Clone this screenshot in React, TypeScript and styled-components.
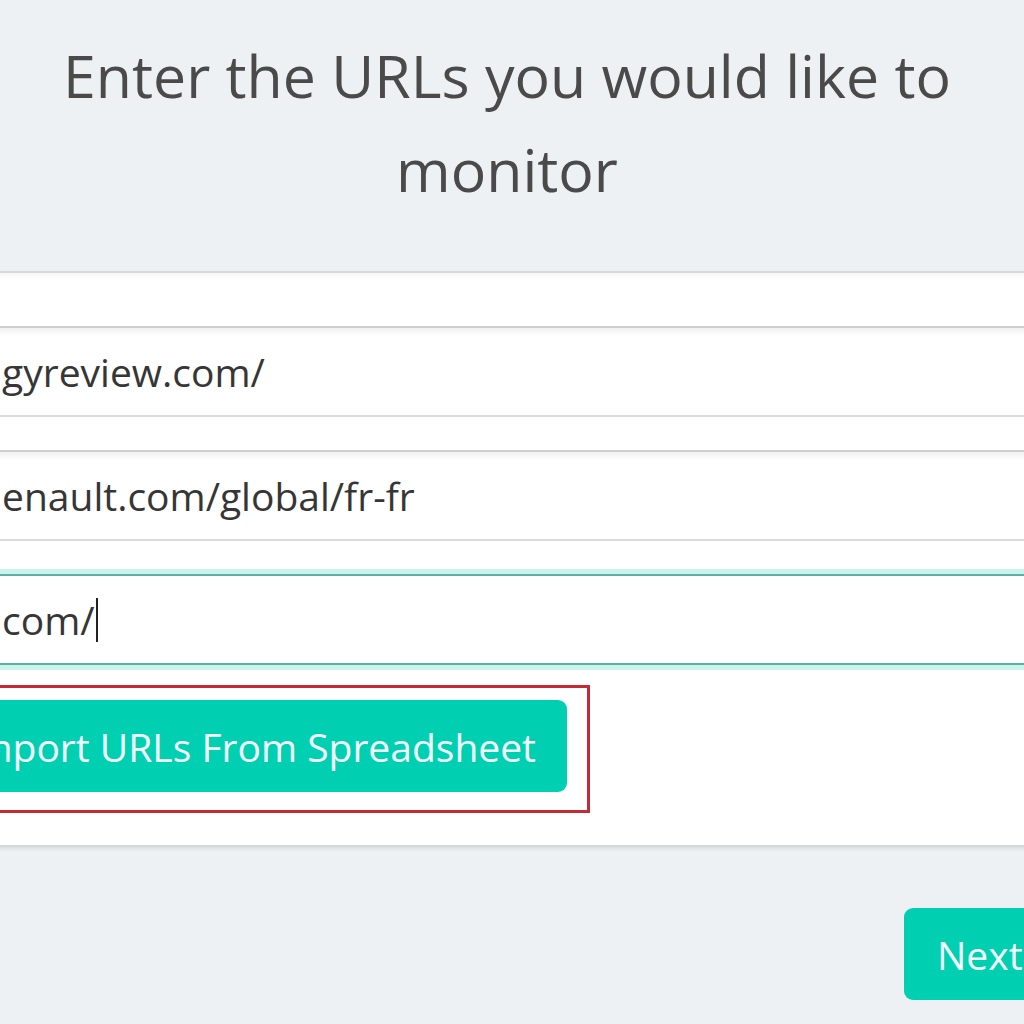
import styled, { createGlobalStyle } from "styled-components";

const GlobalStyle = createGlobalStyle`
  html, body {
    margin: 0;
    padding: 0;
    background: #eef1f4;
    overflow: hidden;
  }
  body {
    font-family: "Open Sans", "Noto Sans", sans-serif;
    color: #363636;
  }
`;

const Page = styled.div`
  width: 1024px;
  height: 1024px;
  overflow: hidden;
  background: #eef1f4;
`;

const Title = styled.h1`
  margin: 0;
  padding: 28px 10px 0 0;
  font-size: 59px;
  font-weight: 400;
  line-height: 94px;
  color: #4a4a4a;
  text-align: center;
`;

const Card = styled.div`
  margin: 55px -60px 0 -60px;
  padding: 53px 0 32px 0;
  background: #ffffff;
  border-top: 2px solid #d6d8da;
  box-shadow: 0 3px 4px rgba(10, 10, 10, 0.12), inset 0 3px 4px rgba(10, 10, 10, 0.04);
  display: flex;
  flex-direction: column;
  gap: 33px;
`;

const UrlInput = styled.div<{ $focused?: boolean }>`
  margin: 0 20px;
  height: 87px;
  padding-left: 40px;
  display: flex;
  align-items: center;
  background: #ffffff;
  font-size: 39px;
  color: #363636;
  border: 2px solid ${(p) => (p.$focused ? "#5fb0a2" : "#dbdbdb")};
  border-top-color: ${(p) => (p.$focused ? "#5fb0a2" : "#cfcfcf")};
  box-shadow: ${(p) =>
    p.$focused
      ? "0 0 0 5px rgba(0, 209, 178, 0.22)"
      : "inset 0 4px 5px rgba(10, 10, 10, 0.06)"};
  white-space: nowrap;
`;

const Caret = styled.span`
  display: inline-block;
  width: 2px;
  height: 44px;
  background: #222;
  margin-left: 1px;
`;

const ButtonRow = styled.div`
  width: 650px;
  display: flex;
  justify-content: flex-end;
  margin-top: -13px;
`;

const Highlight = styled.div`
  display: inline-flex;
  padding: 12px 20px 18px 20px;
  border: 3px solid #c62a35;
`;

const PrimaryButton = styled.button`
  height: 92px;
  padding: 0 31px;
  border: none;
  border-radius: 9px;
  background: #00cfb1;
  color: #f4fffd;
  font-family: "Open Sans", "Noto Sans", sans-serif;
  font-size: 39px;
  white-space: nowrap;
  cursor: pointer;
`;

const Footer = styled.div`
  display: flex;
  justify-content: flex-end;
  padding-top: 63px;
  margin-right: -60px;
`;

const NextButton = styled(PrimaryButton)`
  width: 180px;
  text-align: left;
  padding-left: 33px;
`;

export default function App() {
  return (
    <>
      <GlobalStyle />
      <Page>
        <Title>
          Enter the URLs you would like to
          <br />
          monitor
        </Title>
        <Card>
          <UrlInput>gyreview.com/</UrlInput>
          <UrlInput>enault.com/global/fr-fr</UrlInput>
          <UrlInput $focused>
            com/
            <Caret />
          </UrlInput>
          <ButtonRow>
            <Highlight>
              <PrimaryButton>Import URLs From Spreadsheet</PrimaryButton>
            </Highlight>
          </ButtonRow>
        </Card>
        <Footer>
          <NextButton>Next</NextButton>
        </Footer>
      </Page>
    </>
  );
}
